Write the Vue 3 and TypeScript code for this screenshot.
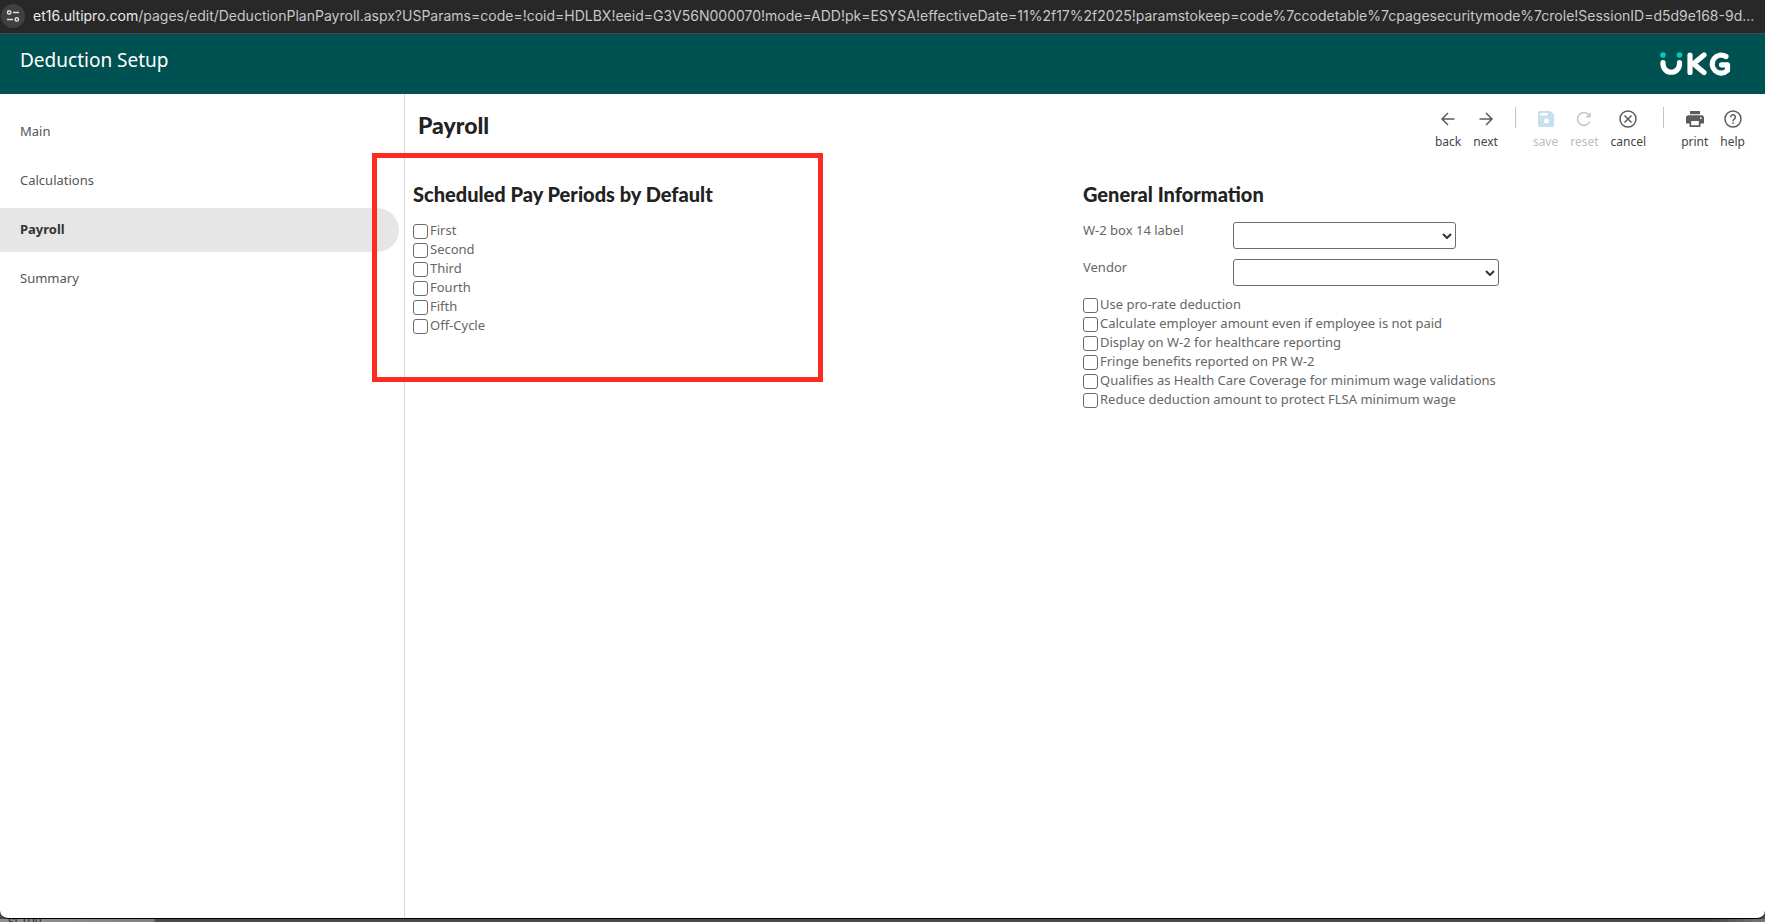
<script setup lang="ts">
import { ref } from 'vue'

interface Check {
  id: string
  label: string
}
const navItems: string[] = ['Main', 'Calculations', 'Payroll', 'Summary']
const current = ref<string>('Payroll')

const periods: Check[] = [
  { id: 'first', label: 'First' },
  { id: 'second', label: 'Second' },
  { id: 'third', label: 'Third' },
  { id: 'fourth', label: 'Fourth' },
  { id: 'fifth', label: 'Fifth' },
  { id: 'off-cycle', label: 'Off-Cycle' },
]
const options: Check[] = [
  { id: 'prorate', label: 'Use pro-rate deduction' },
  { id: 'employer', label: 'Calculate employer amount even if employee is not paid' },
  { id: 'healthcare', label: 'Display on W-2 for healthcare reporting' },
  { id: 'fringe', label: 'Fringe benefits reported on PR W-2' },
  { id: 'coverage', label: 'Qualifies as Health Care Coverage for minimum wage validations' },
  { id: 'flsa', label: 'Reduce deduction amount to protect FLSA minimum wage' },
]
const selected = ref<string[]>([])
const w2Box = ref<string>('')
const vendor = ref<string>('')
</script>

<template>
  <div class="window">
    <div class="address-bar">
      <button class="site-info" type="button" aria-label="Site information">
        <svg width="14" height="14" viewBox="0 0 14 14" fill="none" stroke="#dcdcdc" stroke-width="1.5">
          <circle cx="3.2" cy="3.4" r="1.7" />
          <path d="M7 3.4h6M1 10.4h6" />
          <circle cx="10.8" cy="10.4" r="1.7" />
        </svg>
      </button>
      <div class="url"><span class="host">et16.ultipro.com</span>/pages/edit/DeductionPlanPayroll.aspx?USParams=code=!coid=HDLBX!eeid=G3V56N000070!mode=ADD!pk=ESYSA!effectiveDate=11%2f17%2f2025!paramstokeep=code%7ccodetable%7cpagesecuritymode%7crole!SessionID=d5d9e168-9d...</div>
    </div>

    <header class="app-header">
      <div class="app-title">Deduction Setup</div>
      <svg class="logo" width="72" height="24" viewBox="0 0 72 24" fill="none" role="img" aria-label="UKG">
        <circle cx="3" cy="3" r="2.8" fill="#00cdb9" />
        <circle cx="19.5" cy="3" r="2.8" fill="#00cdb9" />
        <g stroke="#fff" stroke-width="5.2" stroke-linecap="round" stroke-linejoin="round">
          <path d="M3 10.500v1.500a8.250 8.250 0 0 0 16.500 0v-1.500" />
          <path d="M30 3v17.500M44 3L33.500 11.800L44 20.500" />
          <path d="M66 4.500A9 9 0 1 0 67.500 18.500V12.800H61.500" />
        </g>
      </svg>
    </header>

    <div class="body">
      <nav class="side-nav">
        <a
          v-for="item in navItems"
          :key="item"
          href="#"
          :class="{ active: item === current }"
          @click.prevent="current = item"
        >{{ item }}</a>
      </nav>

      <main class="content">
        <div class="page-head">
          <h1>Payroll</h1>
          <div class="toolbar">
            <button type="button">
              <svg viewBox="0 0 18 18" fill="none" stroke="#5c5c5c" stroke-width="1.500"><path d="M15.500 9H3M9 3L3 9l6 6" /></svg>
              <span>back</span>
            </button>
            <button type="button">
              <svg viewBox="0 0 18 18" fill="none" stroke="#5c5c5c" stroke-width="1.500"><path d="M2.500 9H15M9 3l6 6-6 6" /></svg>
              <span>next</span>
            </button>
            <i class="divider"></i>
            <button type="button" disabled>
              <svg viewBox="0 0 18 18"><path fill="#c6e0ef" fill-rule="evenodd" d="M2.500 1H13.500L17 4.500V15.500a1.500 1.500 0 0 1-1.500 1.500H2.500A1.500 1.500 0 0 1 1 15.500V2.500A1.500 1.500 0 0 1 2.500 1ZM3.500 3V5.500H10.500V3ZM9.500 8.500a2.500 2.500 0 1 0 0 5a2.500 2.500 0 1 0 0-5Z" /></svg>
              <span>save</span>
            </button>
            <button type="button" disabled>
              <svg viewBox="0 0 18 18" fill="none" stroke="#c8c8c8" stroke-width="1.600"><path d="M14.800 11.500A6.400 6.400 0 1 1 13.500 4.500L15 6" /><path d="M15.800 2V7.500H10.300Z" fill="#c8c8c8" stroke="none" /></svg>
              <span>reset</span>
            </button>
            <button type="button">
              <svg viewBox="0 0 18 18" fill="none" stroke="#5c5c5c" stroke-width="1.500"><circle cx="9" cy="9" r="8" /><path d="M5.500 5.500l7 7M12.500 5.500l-7 7" /></svg>
              <span>cancel</span>
            </button>
            <i class="divider"></i>
            <button type="button">
              <svg viewBox="0 0 18 18"><path fill="#5c5c5c" fill-rule="evenodd" d="M4 1H14V4.300H4ZM3 5.300H15A2.700 2.700 0 0 1 18 8V13.500H14.500V17H3.500V13.500H0V8A2.700 2.700 0 0 1 3 5.300ZM5.200 11V15.300H12.800V11ZM14.800 7.300a.9.9 0 1 0 0 1.800a.9.9 0 1 0 0-1.800Z" /></svg>
              <span>print</span>
            </button>
            <button type="button">
              <svg viewBox="0 0 18 18" fill="none" stroke="#5c5c5c" stroke-width="1.500"><circle cx="9" cy="9" r="8" /><path d="M6.600 7.200a2.400 2.400 0 1 1 3.700 2C9.400 9.800 9 10.200 9 11.200M9 12.500v1.600" /></svg>
              <span>help</span>
            </button>
          </div>
        </div>

        <div class="columns">
          <section>
            <h2>Scheduled Pay Periods by Default</h2>
            <div class="checks">
              <label v-for="p in periods" :key="p.id" :for="p.id">
                <input :id="p.id" v-model="selected" type="checkbox" :value="p.id" />{{ p.label }}
              </label>
            </div>
          </section>
          <section>
            <h2>General Information</h2>
            <div class="fields">
              <div class="field">
                <label for="w2-box">W-2 box 14 label</label>
                <div class="select-wrap short">
                  <select id="w2-box" v-model="w2Box"><option value=""></option></select>
                  <svg viewBox="0 0 10 6" fill="none" stroke="#333" stroke-width="2"><path d="M1 1l4 4 4-4" /></svg>
                </div>
              </div>
              <div class="field">
                <label for="vendor">Vendor</label>
                <div class="select-wrap">
                  <select id="vendor" v-model="vendor"><option value=""></option></select>
                  <svg viewBox="0 0 10 6" fill="none" stroke="#333" stroke-width="2"><path d="M1 1l4 4 4-4" /></svg>
                </div>
              </div>
            </div>
            <div class="checks">
              <label v-for="o in options" :key="o.id" :for="o.id">
                <input :id="o.id" v-model="selected" type="checkbox" :value="o.id" />{{ o.label }}
              </label>
            </div>
          </section>
        </div>
        <div class="highlight"></div>
      </main>
    </div>
    <div class="backdrop"><span>SETUP</span></div>
  </div>
</template>

<style>
body {
  background: #4a4a4a;
}
</style>

<style scoped>
* {
  box-sizing: border-box;
}
.window {
  display: flex;
  flex-direction: column;
  min-height: 100vh;
  font-family: 'Noto Sans', 'Open Sans', sans-serif;
  font-size: 13px;
  color: #666;
}
.address-bar {
  display: flex;
  align-items: center;
  gap: 8px;
  height: 34px;
  padding: 0 0 1px 1px;
  background: #282828;
  border-bottom: 1px solid #484848;
}
.site-info {
  display: grid;
  place-items: center;
  width: 24px;
  height: 24px;
  padding: 0;
  border: 0;
  border-radius: 12px;
  background: #404040;
}
.url {
  flex: 1;
  min-width: 0;
  overflow: hidden;
  white-space: nowrap;
  font-family: Inter, Roboto, sans-serif;
  font-size: 14px;
  line-height: 20px;
  color: #c7c7c7;
}
.host {
  color: #ececec;
}
.app-header {
  display: flex;
  justify-content: space-between;
  align-items: flex-start;
  height: 60px;
  padding: 12px 33px 0 20px;
  background: #005151;
}
.app-title {
  font-size: 19px;
  line-height: 28px;
  color: #fff;
}
.logo {
  margin-top: 6px;
  overflow: visible;
}
.body {
  display: flex;
  flex: 1;
  background: #fff;
  border-radius: 0 0 8px 8px;
  border-bottom: 1px solid #000;
}
.side-nav {
  display: flex;
  flex-direction: column;
  gap: 5px;
  width: 405px;
  padding: 16px 5px 0 0;
  border-right: 1px solid #d9d9d9;
}
.side-nav a {
  height: 44px;
  padding-left: 20px;
  line-height: 43px;
  color: #555;
  text-decoration: none;
}
.side-nav a.active {
  background: #e6e6e6;
  border-radius: 0 22px 22px 0;
  font-weight: 700;
  color: #333;
}
.content {
  position: relative;
  flex: 1;
}
.page-head {
  display: flex;
  justify-content: space-between;
  align-items: flex-start;
  height: 86px;
  padding: 13px 20px 0 13px;
}
h1,
h2 {
  margin: 0;
  font-family: Lato, sans-serif;
  font-weight: 900;
  line-height: 28px;
  color: #222;
}
h1 {
  padding-top: 4px;
  font-size: 23px;
}
h2 {
  font-size: 20px;
}
.toolbar {
  display: flex;
  gap: 12px;
}
.toolbar button {
  display: flex;
  flex-direction: column;
  align-items: center;
  gap: 6px;
  padding: 3px 0 0;
  border: 0;
  background: none;
  font-family: inherit;
  font-size: 12px;
  line-height: 16px;
  color: #444;
}
.toolbar button:disabled {
  color: #bcbcbc;
}
.toolbar svg {
  width: 18px;
  height: 18px;
}
.divider {
  width: 1px;
  height: 21px;
  margin: 0 5px;
  background: #c4c4c4;
}
.columns {
  display: grid;
  grid-template-columns: 1fr 1fr;
  padding: 0 12px 0 8px;
}
.checks {
  display: flex;
  flex-direction: column;
}
.checks label {
  display: flex;
  width: max-content;
  gap: 2px;
  height: 19px;
  line-height: 18px;
}
.checks input {
  appearance: none;
  width: 15px;
  height: 15px;
  margin: 3px 0 0;
  border: 1px solid #6b6b6b;
  border-radius: 3px;
  background: #fff;
}
h2 + * {
  margin-top: 13px;
}
.field {
  display: flex;
  height: 37px;
}
.field label {
  width: 150px;
  line-height: 18px;
}
.select-wrap {
  display: grid;
  width: 266px;
  height: 27px;
  margin-top: 1px;
  align-items: center;
}
.select-wrap.short {
  width: 223px;
}
.select-wrap > * {
  grid-area: 1 / 1;
}
.select-wrap select {
  appearance: none;
  width: 100%;
  height: 27px;
  border: 1px solid #6b6b6b;
  border-radius: 3px;
  background: #fff;
}
.select-wrap svg {
  width: 10px;
  height: 6px;
  justify-self: end;
  margin-right: 4px;
  pointer-events: none;
}
.highlight {
  position: absolute;
  top: 59px;
  left: -33px;
  width: 451px;
  height: 229px;
  border: 5px solid #ff2a20;
  pointer-events: none;
}
.backdrop {
  height: 3px;
  padding-left: 8px;
  overflow: hidden;
  background: linear-gradient(90deg, #909090 0, #808080 154px, #4a4a4a 155px, #4a4a4a 97%, #777 100%);
  font-family: 'Liberation Sans', sans-serif;
  font-size: 10px;
  line-height: 7px;
  color: #222;
}
</style>
